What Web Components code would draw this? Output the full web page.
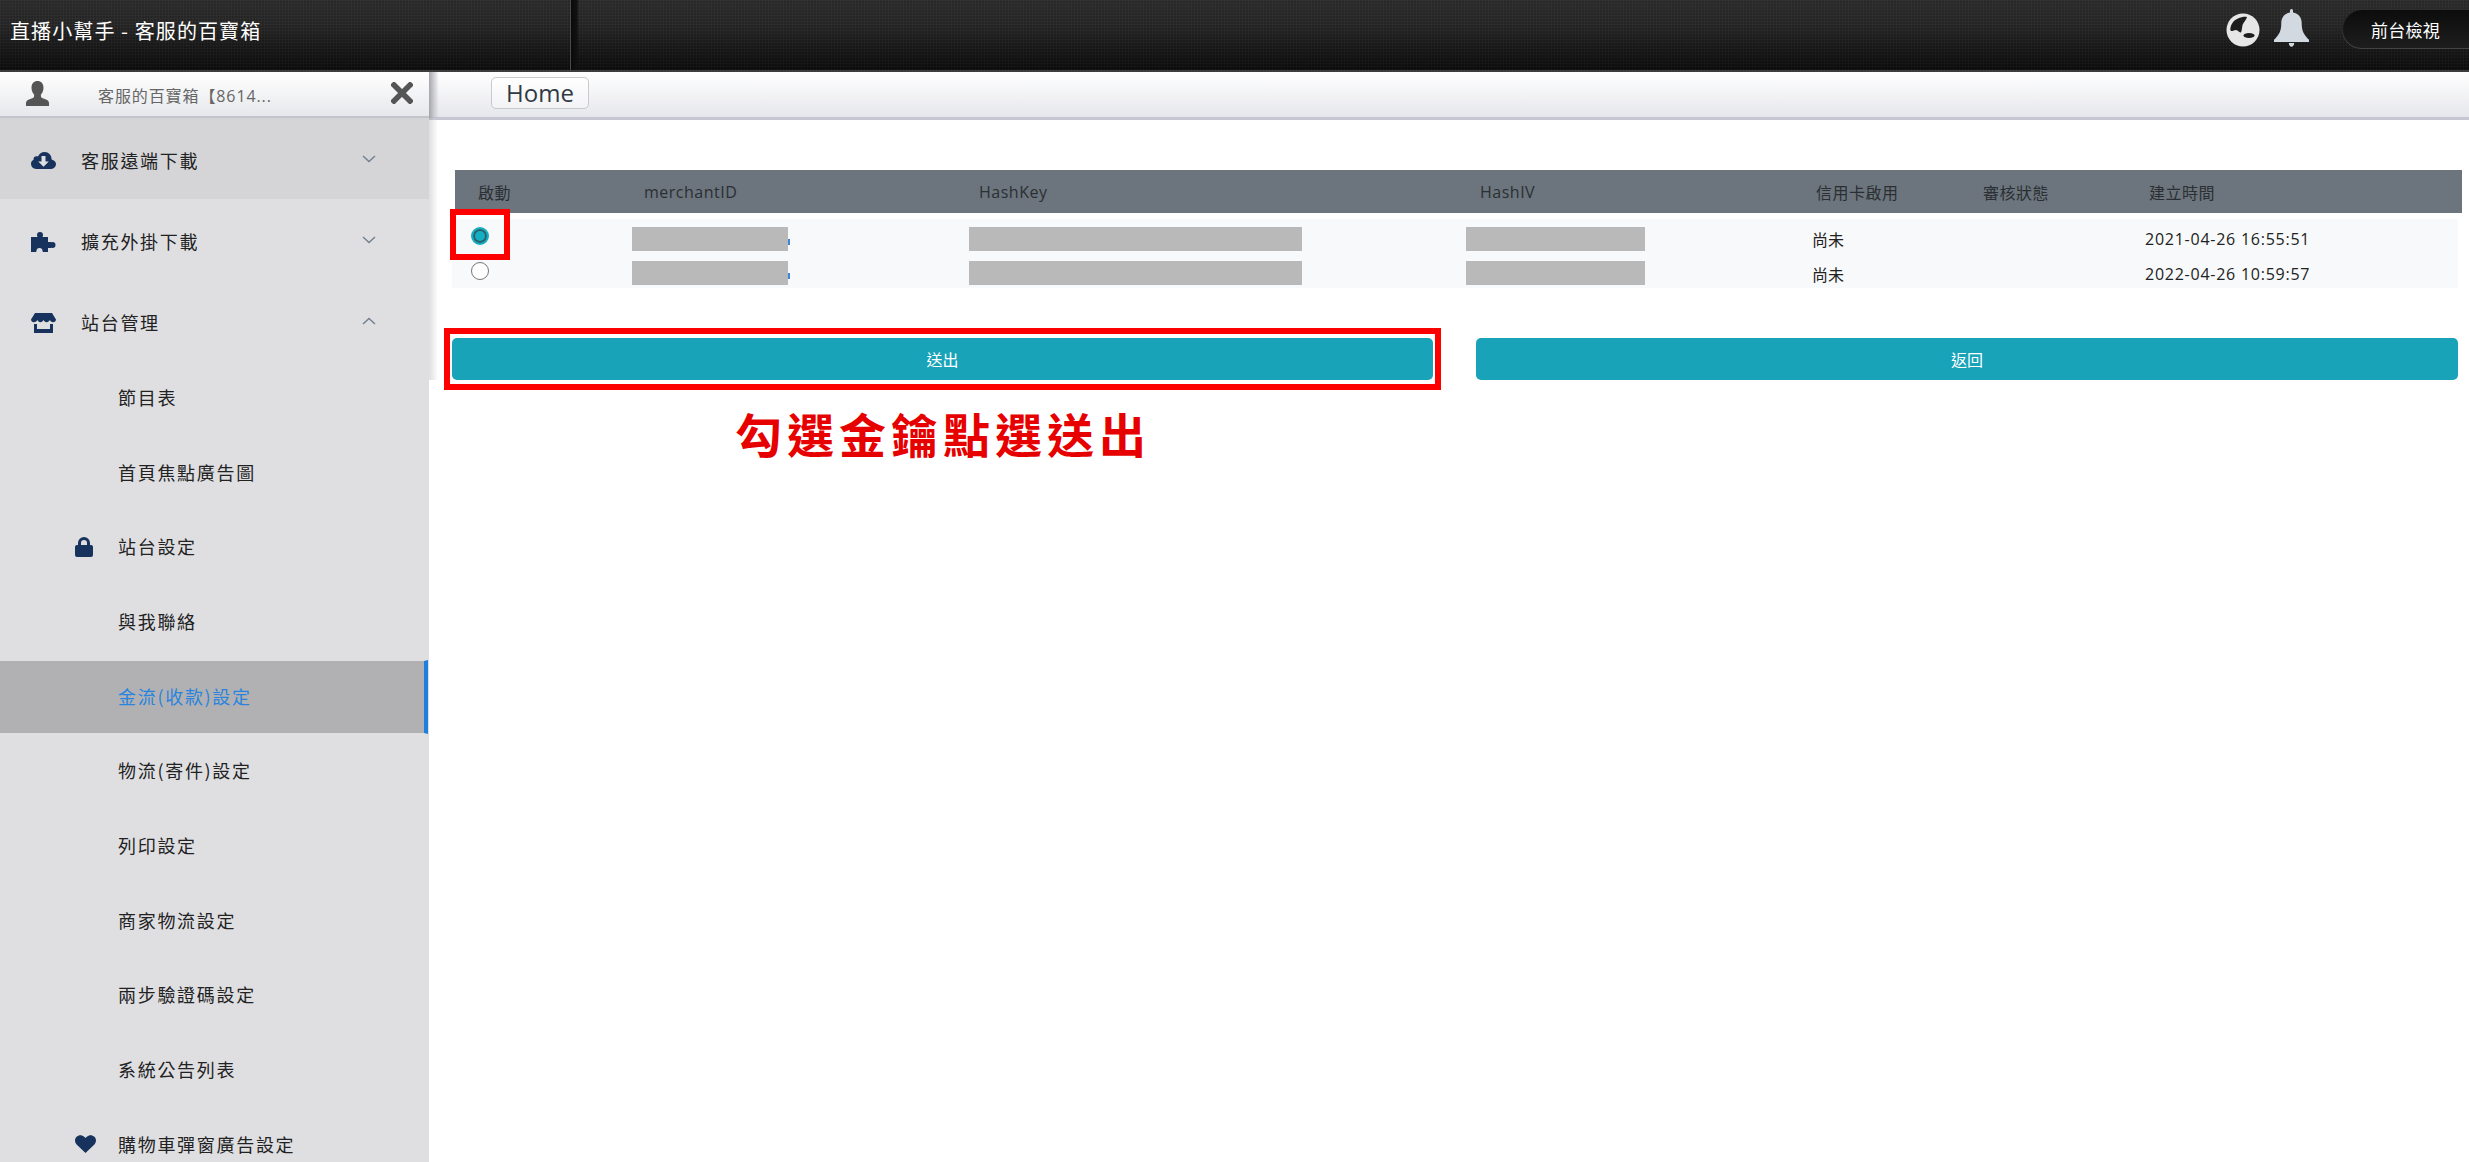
<!DOCTYPE html>
<html lang="zh-Hant">
<head>
<meta charset="utf-8">
<title>Home</title>
<style>
html,body{margin:0;height:100%;overflow:hidden;background:#fff}
body{font-family:"Open Sans","Noto Sans CJK TC",sans-serif;color:#222}
</style>
</head>
<body>
<app-shell>
  <top-bar slot="top" title-text="直播小幫手 - 客服的百寶箱" action="前台檢視"></top-bar>
  <side-nav slot="side" user="客服的百寶箱【8614...">
    <nav-group icon="cloud" tone="open">客服遠端下載</nav-group>
    <nav-group icon="puzzle">擴充外掛下載</nav-group>
    <nav-group icon="store" expanded>站台管理</nav-group>
    <nav-sub>節目表</nav-sub>
    <nav-sub>首頁焦點廣告圖</nav-sub>
    <nav-sub icon="lock">站台設定</nav-sub>
    <nav-sub>與我聯絡</nav-sub>
    <nav-sub active>金流(收款)設定</nav-sub>
    <nav-sub>物流(寄件)設定</nav-sub>
    <nav-sub>列印設定</nav-sub>
    <nav-sub>商家物流設定</nav-sub>
    <nav-sub>兩步驗證碼設定</nav-sub>
    <nav-sub>系統公告列表</nav-sub>
    <nav-sub icon="heart">購物車彈窗廣告設定</nav-sub>
  </side-nav>
  <main-pane slot="main">
    <crumb-bar>Home</crumb-bar>
    <key-table>
      <key-row head>
        <span style="padding-left:23px">啟動</span>
        <span style="padding-left:12px">merchantID</span>
        <span style="padding-left:10px">HashKey</span>
        <span style="padding-left:14px">HashIV</span>
        <span style="padding-left:4px">信用卡啟用</span>
        <span>審核狀態</span>
        <span style="padding-left:5px">建立時間</span>
      </key-row>
      <key-row>
        <radio-dot checked><mark-box style="inset:-20.5px -22.5px -16.5px -23.5px"></mark-box></radio-dot>
        <mask-bar width="156" speck></mask-bar>
        <mask-bar width="333"></mask-bar>
        <mask-bar width="179"></mask-bar>
        <span class="m">尚未</span>
        <span></span>
        <span class="d">2021-04-26 16:55:51</span>
      </key-row>
      <key-row>
        <radio-dot></radio-dot>
        <mask-bar width="156" speck></mask-bar>
        <mask-bar width="333"></mask-bar>
        <mask-bar width="179"></mask-bar>
        <span class="m">尚未</span>
        <span></span>
        <span class="d">2022-04-26 10:59:57</span>
      </key-row>
    </key-table>
    <action-row>
      <action-button>送出<mark-box slot="over" style="inset:-10px -8px"></mark-box></action-button>
      <action-button>返回</action-button>
    </action-row>
    <hint-text>勾選金鑰點選送出</hint-text>
  </main-pane>
</app-shell>

<script>
const ICONS = {
  cloud:'<svg viewBox="0 0 25 18" width="25" height="18"><path fill="#17325c" d="M20.6 7.4C20.7 3.4 17.6 0 13.6 0 10.6 0 8 1.9 7 4.6 6.3 4.2 5.6 4.1 4.9 4.3 3.2 4.7 2.3 6.2 2.6 7.800 1 8.500 0 10 0 11.800 0 14.700 2.300 17 5.100 17h14.600c2.900 0 5.300-2.200 5.300-5 0-2.200-1.800-4-4.400-4.600z"/><path fill="#dfdfe2" d="M10.500 4h4v5.500h3.300L12.500 14.800 7.200 9.500h3.300z"/></svg>',
  puzzle:'<svg viewBox="0 0 25 20" width="25" height="20"><path fill="#17325c" d="M0 5h17v5h3v6h-3v4H0z"/><circle cx="9" cy="3" r="3" fill="#17325c"/><rect x="7.500" y="3" width="3" height="3" fill="#17325c"/><circle cx="21.500" cy="13" r="3" fill="#17325c"/><circle cx="8.500" cy="19" r="3" fill="#dfdfe2"/><rect x="5.500" y="19" width="6" height="1" fill="#dfdfe2"/></svg>',
  store:'<svg viewBox="0 0 25 20" width="25" height="20"><path fill="#17325c" d="M4 0h17l4 6.500c0 1.600-1.300 2.700-3 2.700-1.500 0-2.700-.9-3.200-2.100-.5 1.200-1.700 2.100-3.200 2.100s-2.600-.9-3.100-2.100c-.5 1.200-1.600 2.100-3.100 2.100S7 8.300 6.400 7.100C5.900 8.300 4.600 9.200 3 9.200 1.300 9.200 0 8.100 0 6.500z"/><path fill="#17325c" d="M3 11h3v5h13v-5h3v9H3z"/></svg>',
  lock:'<svg viewBox="0 0 18 20" width="18" height="20"><path fill="#17325c" d="M3 8V6a6 6 0 0 1 12 0v2h1a2 2 0 0 1 2 2v8a2 2 0 0 1-2 2H2a2 2 0 0 1-2-2v-8a2 2 0 0 1 2-2zm3 0h6V6a3 3 0 0 0-6 0z"/></svg>',
  heart:'<svg viewBox="0 0 21 18" width="21" height="18"><path fill="#17325c" d="M10.500 18 1.600 9.400C-.5 7.300-.5 3.900 1.600 1.800 3.700-.3 7.100-.3 9.200 1.800l1.300 1.300 1.300-1.300c2.100-2.100 5.500-2.100 7.600 0s2.100 5.500 0 7.600z"/></svg>'
};
function def(name, css, html){
  class C extends HTMLElement{
    constructor(){ super(); this.attachShadow({mode:'open'}); }
    connectedCallback(){
      this.shadowRoot.innerHTML='<style>'+css+'</style>'+(typeof html==='function'?html(this):html);
    }
  }
  customElements.define(name,C);
}

def('app-shell',`
  :host{display:flex;flex-direction:column;height:100vh;width:100%;overflow:hidden}
  .body{flex:1;display:flex;min-height:0}
`,`<slot name="top"></slot><div class="body"><slot name="side"></slot><slot name="main"></slot></div>`);

def('top-bar',`
  :host{display:flex;align-items:center;flex:none;height:72px;box-sizing:border-box;border-bottom:2px solid #3d3d3d;
    background:
      repeating-linear-gradient(90deg,rgba(255,255,255,.022) 0 1px,rgba(0,0,0,.03) 1px 3px),
      repeating-linear-gradient(0deg,rgba(255,255,255,.022) 0 1px,rgba(0,0,0,.03) 1px 3px),
      linear-gradient(#2b2b2b,#262626 35%,#0b0b0b);
    color:#fff;position:relative}
  .t{width:570px;padding-left:10px;box-sizing:border-box;font-size:20px;line-height:24px;position:relative;top:-4px;flex:none;white-space:nowrap;letter-spacing:1.100px;font-family:"Noto Sans CJK TC",sans-serif}
  .div{width:9px;align-self:stretch;flex:none;box-sizing:border-box;border-left:1px solid #4a4a4a;background:linear-gradient(90deg,#0a0a0a,#111 70%,transparent)}
  .sp{flex:1}
  .globe{margin-right:14px;display:block;position:relative;top:-5px}
  .bell{margin-right:33px;display:block;position:relative;top:-7px}
  .pill{width:127px;height:39px;box-sizing:border-box;border-radius:20px 0 0 20px;display:flex;align-items:center;justify-content:center;
    background:linear-gradient(#0c0c0c,#1e1e1e);box-shadow:inset 0 -1px 0 #444,inset 1px 0 0 #2c2c2c;font-size:17px;position:relative;top:-6px;color:#fff;letter-spacing:.3px}
`,h=>`<span class="t">${h.getAttribute('title-text')}</span><span class="div"></span><span class="sp"></span>
  <svg class="globe" width="34" height="34" viewBox="0 0 34 34"><circle cx="17" cy="17" r="16.5" fill="#e6e6e6"/><path fill="#1c1c1c" d="M4.500 15C5 11 8 7 12 5.500 15 4 19 3.500 21 4c-.5 3-3.500 5-4.500 8-.5 2.500-.5 5-1.500 7.500-1.500 0-3-2-5-2.500-2 0-3.500 1.500-5 1-.8-1-.8-2-.5-3z"/><ellipse cx="23" cy="22.500" rx="5.500" ry="2.600" fill="#1c1c1c"/></svg>
  <svg class="bell" width="35" height="38" viewBox="0 0 35 38"><path fill="#d3d9e0" d="M17.500 0c1 0 1.500.8 1.500 2v1.400c5.500 1 8.700 5 8.700 10.600 0 8 2 11.600 7.300 16.800V33H0v-2.200C5.300 25.600 7.300 22 7.300 14c0-5.600 3.200-9.600 8.700-10.600V2c0-1.200.5-2 1.500-2z"/><path fill="#d3d9e0" d="M14.800 34h5.400c0 2-1.100 3.700-2.700 3.700s-2.700-1.700-2.700-3.700z"/></svg>
  <span class="pill">${h.getAttribute('action')}</span>`);

def('side-nav',`
  :host{display:block;width:429px;flex:none;background:#dfdfe2;overflow:hidden;position:relative;z-index:2}
  .h{height:46px;box-sizing:border-box;display:flex;align-items:center;background:linear-gradient(#fff,#e7e8ec);border-bottom:2px solid #c4c5cc;color:#666;font-size:16px}
  .u{margin-left:26px;flex:none;position:relative;top:-1px}
  .n{margin-left:49px;width:293px;flex:none;white-space:nowrap;letter-spacing:.9px;position:relative;top:1px}
  .x{flex:none;position:relative;top:-1px}
`,h=>`<div class="h">
    <svg class="u" width="23" height="25" viewBox="0 0 23 25"><path fill="#555" d="M11.500 0c3.600 0 6 2.700 6 6.800 0 2.700-1 5.200-2.600 6.700v1.700c0 1.300 1.100 1.700 3.200 2.500 2.700 1 4.900 1.900 4.900 4.300V25H0v-3c0-2.400 2.200-3.300 4.900-4.300 2.100-.8 3.200-1.200 3.200-2.500v-1.700C6.500 12 5.500 9.500 5.500 6.800 5.500 2.700 7.900 0 11.500 0z"/></svg>
    <span class="n">${h.getAttribute('user')}</span>
    <svg class="x" width="22" height="22" viewBox="0 0 22 22"><path d="M3 3 19 19M19 3 3 19" stroke="#555" stroke-width="5.5" stroke-linecap="square"/></svg>
  </div><slot></slot>`);

def('nav-group',`
  :host{display:flex;align-items:center;height:81px;color:#222;font-size:18px;letter-spacing:1.700px;padding-left:31px;box-sizing:border-box;font-family:"Noto Sans CJK TC",sans-serif}
  :host([tone=open]){background:#d5d5d8}
  .i{width:50px;flex:none;display:flex;align-items:center;position:relative;top:2px}
  .l{width:281px;flex:none;white-space:nowrap;position:relative;top:1.500px}
  .c{flex:none}
`,h=>`<span class="i">${ICONS[h.getAttribute('icon')]}</span><span class="l"><slot></slot></span>
  <svg class="c" width="14" height="8" viewBox="0 0 14 8"><path d="${h.hasAttribute('expanded')?'M1 7 7 1.500 13 7':'M1 1 7 6.500 13 1'}" fill="none" stroke="#75808f" stroke-width="1.500"/></svg>`);

def('nav-sub',`
  :host{display:flex;align-items:center;height:74.700px;box-sizing:border-box;border-block:1.350px solid transparent;background-clip:padding-box;padding-left:75px;color:#222;font-size:18px;letter-spacing:1.700px;font-family:"Noto Sans CJK TC",sans-serif}
  :host([active]){background-color:#b1b1b3;color:#2a84de;border-right:4px solid #1e7fdc;margin-right:1px}
  .i{width:43px;flex:none;display:flex;align-items:center;position:relative;top:-1px}
  .l{white-space:nowrap;position:relative;top:-1.500px}
`,h=>`<span class="i">${ICONS[h.getAttribute('icon')]||''}</span><span class="l"><slot></slot></span>`);

def('main-pane',`
  :host{display:block;flex:1;min-width:0;position:relative}
  .shade{position:absolute;left:0;top:0;width:9px;height:308px;z-index:3;pointer-events:none;background:linear-gradient(90deg,rgba(150,150,155,.3),rgba(200,200,205,.25) 60%,rgba(255,255,255,0))}
  .shade2{position:absolute;left:0;top:0;width:10px;height:46px;z-index:4;pointer-events:none;background:linear-gradient(90deg,rgba(150,150,155,.75),rgba(190,190,195,.6) 50%,rgba(255,255,255,0))}
`,`<div class="shade"></div><div class="shade2"></div><slot></slot>`);

def('crumb-bar',`
  :host{display:flex;align-items:center;height:48px;box-sizing:border-box;padding:0 0 3px 62px;background:linear-gradient(#fff,#e6e7ec);border-bottom:3px solid #c6c6d2;margin-bottom:50px}
  .b{display:block;width:98px;height:32px;box-sizing:border-box;border:1px solid #c9c9ce;border-radius:5px;background:linear-gradient(#fff,#f3f3f6);font-size:24px;line-height:29px;text-align:center;color:#2f3a45}
`,`<span class="b"><slot></slot></span>`);

def('key-table',`
  :host{display:block;margin:0 11px 0 23px;position:relative}
`,`<slot></slot>`);

def('key-row',`
  :host{display:grid;grid-template-columns:180px 337px 497px 346px 171px 162px 1fr;align-items:center;height:34.500px;background:#f8f9fa;font-size:16px;color:#222;position:relative;white-space:nowrap}
  :host([head]){height:43px;background:#6c757d;color:#2b2f33;margin:0 -4px 6px 3px;grid-template-columns:177px 337px 497px 346px 171px 161px 1fr;letter-spacing:.5px}
  ::slotted(span.d){letter-spacing:.75px;position:relative;top:3px}
  ::slotted(span.m){position:relative;top:3px}
`,`<slot></slot>`);

def('radio-dot',`
  :host{display:block;position:relative;width:18px;height:18px;margin-left:19px;box-sizing:border-box;border-radius:50%;border:1px solid #767676;background:#fff}
  :host([checked]){background:#13aec4;border:2.500px solid #13aec4;box-shadow:inset 0 0 0 2px #2f5f68}
`,`<slot></slot>`);

def('mask-bar',`
  :host{display:block;height:24px;background:#b9b9b9;position:relative;top:2.500px}
  :host([speck])::after{content:"";position:absolute;right:-1.500px;top:12px;width:1.500px;height:6px;background:#3d86d8}
`,h=>`<style>:host{width:${h.getAttribute('width')}px}</style>`);

def('mark-box',`
  :host{display:block;position:absolute;box-sizing:border-box;border:6px solid #f00;z-index:5;pointer-events:none}
`,``);

def('action-row',`
  :host{display:grid;grid-template-columns:981px 1fr;column-gap:43px;margin:50px 11px 0 23px}
`,`<slot></slot>`);

def('action-button',`
  :host{display:flex;align-items:center;justify-content:center;height:42px;background:#18a3b9;color:#fff;border-radius:5px;font-size:16px;position:relative;box-shadow:0 0 0 1px rgba(255,255,255,.9)}
`,`<slot></slot><slot name="over"></slot>`);

def('hint-text',`
  :host{display:block;margin:26px 0 0 306px;font-size:47px;line-height:54px;font-weight:700;letter-spacing:5px;color:#e60000;font-family:"Noto Sans CJK TC",sans-serif;white-space:nowrap}
`,`<slot></slot>`);
</script>
</body>
</html>
